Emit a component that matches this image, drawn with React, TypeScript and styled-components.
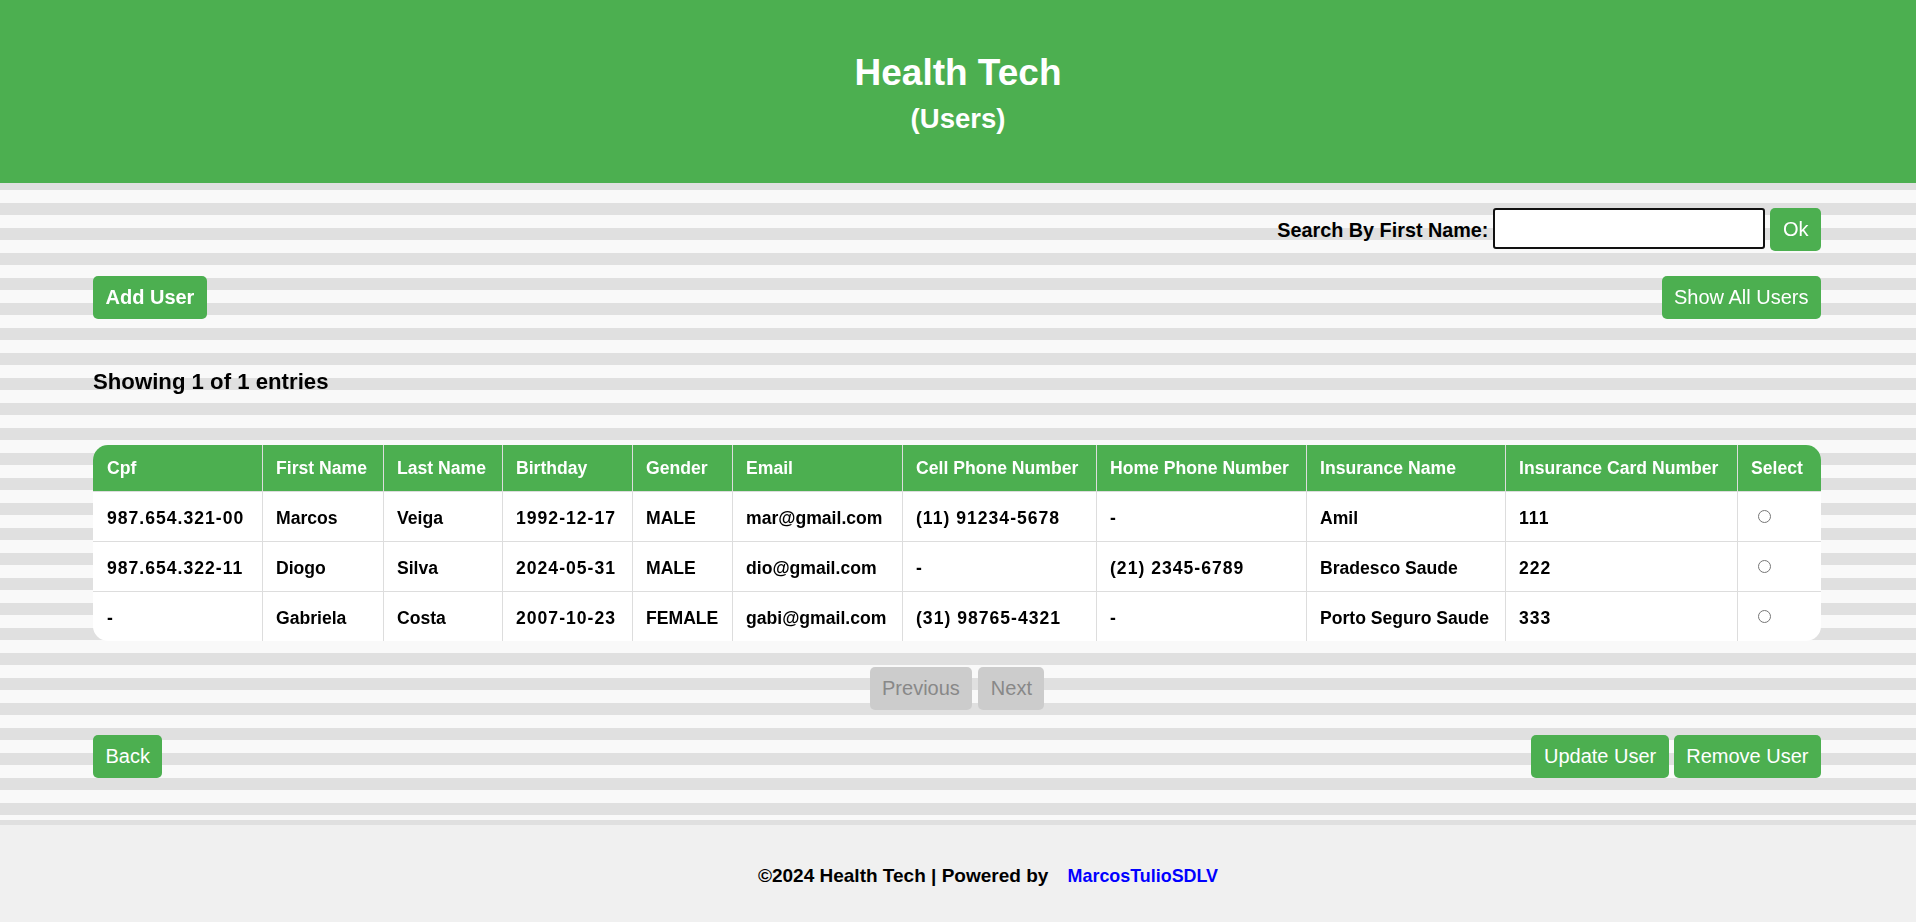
import React from "react";
import styled, { createGlobalStyle } from "styled-components";

const GlobalStyle = createGlobalStyle`
  html, body {
    margin: 0;
    padding: 0;
  }
  body {
    font-family: "Liberation Sans", Arial, sans-serif;
    color: #000;
  }
  * { box-sizing: border-box; }
`;

const Page = styled.div`
  min-height: 100vh;
  display: flex;
  flex-direction: column;
`;

const Header = styled.header`
  background: #4caf50;
  color: #fff;
  text-align: center;
  padding: 51px 0 49px;
`;

const Title = styled.h1`
  margin: 0 0 9px;
  font-size: 37px;
  line-height: 44px;
  font-weight: 700;
`;

const Subtitle = styled.h2`
  margin: 0;
  font-size: 27.5px;
  line-height: 30px;
  font-weight: 700;
`;

const Main = styled.main`
  background: repeating-linear-gradient(
    to bottom,
    #e0e0e0 0,
    #e0e0e0 12.5px,
    #f9f9f9 12.5px,
    #f9f9f9 25px
  );
  background-position: 0 -5px;
  padding: 25px 95px 47px 93px;
  display: flex;
  flex-direction: column;
`;

const SearchRow = styled.div`
  display: flex;
  justify-content: flex-end;
  align-items: flex-start;
  gap: 5px;
`;

const SearchLabel = styled.label`
  align-self: center;
  font-size: 19.8px;
  font-weight: 700;
  line-height: 22px;
  padding-top: 1px;
`;

const SearchInput = styled.input`
  width: 272px;
  height: 41px;
  border: 2px solid #111;
  border-radius: 3px;
  background: #fff;
  padding: 0 14px;
  font-size: 18px;
  font-family: "Liberation Sans", Arial, sans-serif;
  outline: none;
  caret-color: #000;
`;

const Button = styled.button<{ $bold?: boolean; $disabled?: boolean }>`
  height: 43px;
  padding: 0 12.5px;
  border: none;
  border-radius: 5px;
  background: ${(p) => (p.$disabled ? "#cccccc" : "#4caf50")};
  color: ${(p) => (p.$disabled ? "#888888" : "#ffffff")};
  font-family: "Liberation Sans", Arial, sans-serif;
  font-size: 20px;
  font-weight: ${(p) => (p.$bold ? 700 : 400)};
  line-height: 23px;
  cursor: ${(p) => (p.$disabled ? "default" : "pointer")};
  white-space: nowrap;
`;

const SpreadRow = styled.div<{ $top: number }>`
  display: flex;
  justify-content: space-between;
  align-items: center;
  margin-top: ${(p) => p.$top}px;
`;

const ButtonGroup = styled.div`
  display: flex;
  gap: 5px;
`;

const Entries = styled.p`
  margin: 50px 0 50px;
  font-size: 22.2px;
  font-weight: 700;
  line-height: 26px;
`;

const TableWrap = styled.div`
  border-radius: 15px;
  overflow: hidden;
  background: #fff;
`;

const Table = styled.table`
  width: 100%;
  table-layout: fixed;
  border-collapse: separate;
  border-spacing: 0;
  font-size: 17.6px;
  font-weight: 700;
`;

const Col = styled.col<{ $w: number }>`
  width: ${(p) => p.$w}px;
`;

const Th = styled.th`
  background: #4caf50;
  color: #fff;
  text-align: left;
  padding: 12px 12px 12px 13px;
  line-height: 22px;
  border-right: 1px solid #dddddd;
  border-bottom: 1px solid #dddddd;
  white-space: nowrap;
  &:first-child { padding-left: 14px; }
  &:last-child { border-right: none; }
`;

const Td = styled.td<{ $numeric?: boolean }>`
  padding: 16px 12px 12px 13px;
  line-height: 21px;
  letter-spacing: ${(p) => (p.$numeric ? "1px" : "normal")};
  border-right: 1px solid #dddddd;
  border-bottom: 1px solid #dddddd;
  white-space: nowrap;
  &:first-child { padding-left: 14px; }
  &:last-child { border-right: none; }
`;

const Tr = styled.tr`
  &:last-child td { border-bottom: none; }
`;

const Radio = styled.input`
  margin: 2px 3px 0 7px;
  vertical-align: top;
`;

const Pagination = styled.div`
  display: flex;
  justify-content: center;
  gap: 6px;
  margin-top: 26px;
`;

const Footer = styled.footer`
  background: #f0f0f0;
  flex: 1;
  min-height: 97px;
  padding: 40px 0 0 60px;
  text-align: center;
  font-weight: 700;
  font-size: 19px;
  line-height: 22px;
`;

const FooterLink = styled.a`
  color: #0000ff;
  text-decoration: none;
  font-size: 17.9px;
  margin-left: 14px;
`;

const columns: { label: string; w: number; numeric?: boolean }[] = [
  { label: "Cpf", w: 170, numeric: true },
  { label: "First Name", w: 121 },
  { label: "Last Name", w: 119 },
  { label: "Birthday", w: 130, numeric: true },
  { label: "Gender", w: 100 },
  { label: "Email", w: 170 },
  { label: "Cell Phone Number", w: 194, numeric: true },
  { label: "Home Phone Number", w: 210, numeric: true },
  { label: "Insurance Name", w: 199 },
  { label: "Insurance Card Number", w: 232, numeric: true },
  { label: "Select", w: 83 },
];

const users = [
  ["987.654.321-00", "Marcos", "Veiga", "1992-12-17", "MALE", "mar@gmail.com", "(11) 91234-5678", "-", "Amil", "111"],
  ["987.654.322-11", "Diogo", "Silva", "2024-05-31", "MALE", "dio@gmail.com", "-", "(21) 2345-6789", "Bradesco Saude", "222"],
  ["-", "Gabriela", "Costa", "2007-10-23", "FEMALE", "gabi@gmail.com", "(31) 98765-4321", "-", "Porto Seguro Saude", "333"],
];

export default function App() {
  return (
    <Page>
      <GlobalStyle />
      <Header>
        <Title>Health Tech</Title>
        <Subtitle>(Users)</Subtitle>
      </Header>
      <Main>
        <SearchRow>
          <SearchLabel htmlFor="search">Search By First Name:</SearchLabel>
          <SearchInput id="search" type="text" autoFocus />
          <Button>Ok</Button>
        </SearchRow>
        <SpreadRow $top={25}>
          <Button $bold>Add User</Button>
          <Button>Show All Users</Button>
        </SpreadRow>
        <Entries>Showing 1 of 1 entries</Entries>
        <TableWrap>
          <Table>
            <colgroup>
              {columns.map((c) => (
                <Col key={c.label} $w={c.w} />
              ))}
            </colgroup>
            <thead>
              <tr>
                {columns.map((c) => (
                  <Th key={c.label}>{c.label}</Th>
                ))}
              </tr>
            </thead>
            <tbody>
              {users.map((u, i) => (
                <Tr key={i}>
                  {u.map((v, j) => (
                    <Td key={j} $numeric={columns[j].numeric}>
                      {v}
                    </Td>
                  ))}
                  <Td>
                    <Radio type="radio" name="select" />
                  </Td>
                </Tr>
              ))}
            </tbody>
          </Table>
        </TableWrap>
        <Pagination>
          <Button $disabled>Previous</Button>
          <Button $disabled>Next</Button>
        </Pagination>
        <SpreadRow $top={25}>
          <Button>Back</Button>
          <ButtonGroup>
            <Button>Update User</Button>
            <Button>Remove User</Button>
          </ButtonGroup>
        </SpreadRow>
      </Main>
      <Footer>
        ©2024 Health Tech | Powered by <FooterLink href="#">MarcosTulioSDLV</FooterLink>
      </Footer>
    </Page>
  );
}
